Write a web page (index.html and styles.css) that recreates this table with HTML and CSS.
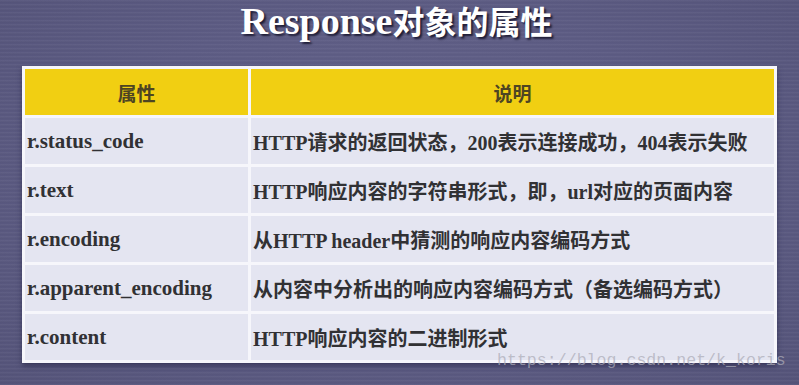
FILE: index.html
```html
<!DOCTYPE html>
<html lang="zh-CN">
<head>
<meta charset="utf-8">
<title>Response对象的属性</title>
<link rel="stylesheet" href="styles.css">
</head>
<body>
<div class="slide">
  <h1 class="title"><span class="title-latin">Response</span><span class="title-cjk">对象的属性</span></h1>
  <div class="table">
    <div class="cell head">属性</div>
    <div class="cell head">说明</div>
    <div class="cell name">r.status_code</div>
    <div class="cell desc">HTTP请求的返回状态，200表示连接成功，404表示失败</div>
    <div class="cell name">r.text</div>
    <div class="cell desc">HTTP响应内容的字符串形式，即，url对应的页面内容</div>
    <div class="cell name">r.encoding</div>
    <div class="cell desc">从HTTP header中猜测的响应内容编码方式</div>
    <div class="cell name">r.apparent_encoding</div>
    <div class="cell desc">从内容中分析出的响应内容编码方式（备选编码方式）</div>
    <div class="cell name">r.content</div>
    <div class="cell desc">HTTP响应内容的二进制形式</div>
  </div>
  <div class="watermark">https://blog.csdn.net/k_koris</div>
</div>
</body>
</html>
```
FILE: styles.css
```css
html, body {
  margin: 0;
  padding: 0;
}
body {
  width: 799px;
  height: 385px;
  overflow: hidden;
  background: #5d5c84;
}
.slide {
  position: relative;
  width: 799px;
  height: 385px;
  box-sizing: border-box;
  padding-left: 22px;
  background:
    repeating-linear-gradient(180deg, rgba(255,255,255,0.035) 0px, rgba(255,255,255,0.035) 1px, rgba(0,0,0,0.03) 2px, rgba(0,0,0,0) 4px),
    radial-gradient(ellipse at 50% 45%, #65648c 0%, #5d5c84 55%, #55547a 100%);
}
.title {
  margin: 0;
  height: 66px;
  padding-top: 0;
  padding-right: 28px;
  box-sizing: border-box;
  text-align: center;
  color: #ffffff;
  font-size: 32px;
  font-weight: bold;
  line-height: 40px;
  white-space: nowrap;
  text-shadow: 2px 2px 2px rgba(20, 18, 40, 0.85);
}
.title-latin {
  font-family: "Liberation Serif", serif;
  font-size: 38px;
}
.title-cjk {
  font-family: "Noto Sans CJK SC", sans-serif;
  font-size: 32px;
  font-weight: 700;
}
.table {
  width: 755px;
  box-sizing: border-box;
  display: grid;
  grid-template-columns: 223px 523px;
  grid-auto-rows: 46px;
  gap: 3px;
  padding: 3px;
  background: #f6f6fb;
  box-shadow: 0 3px 5px rgba(30, 28, 60, 0.55);
}
.cell {
  display: flex;
  align-items: center;
  font-family: "Liberation Serif", "Noto Sans CJK SC", serif;
  font-weight: bold;
  font-size: 20px;
  color: #313134;
  background: #e4e5f1;
  white-space: nowrap;
}
.head {
  justify-content: center;
  background: #f1cf12;
  font-family: "Noto Sans CJK SC", sans-serif;
  font-size: 19px;
  color: #4e4522;
}
.name {
  padding-left: 2px;
  font-size: 21px;
}
.desc {
  padding-left: 2px;
}
.watermark {
  position: absolute;
  left: 497px;
  top: 351px;
  font-family: "Liberation Mono", monospace;
  font-size: 16.6px;
  line-height: 20px;
  color: rgba(172, 172, 184, 0.72);
  white-space: nowrap;
}
```
